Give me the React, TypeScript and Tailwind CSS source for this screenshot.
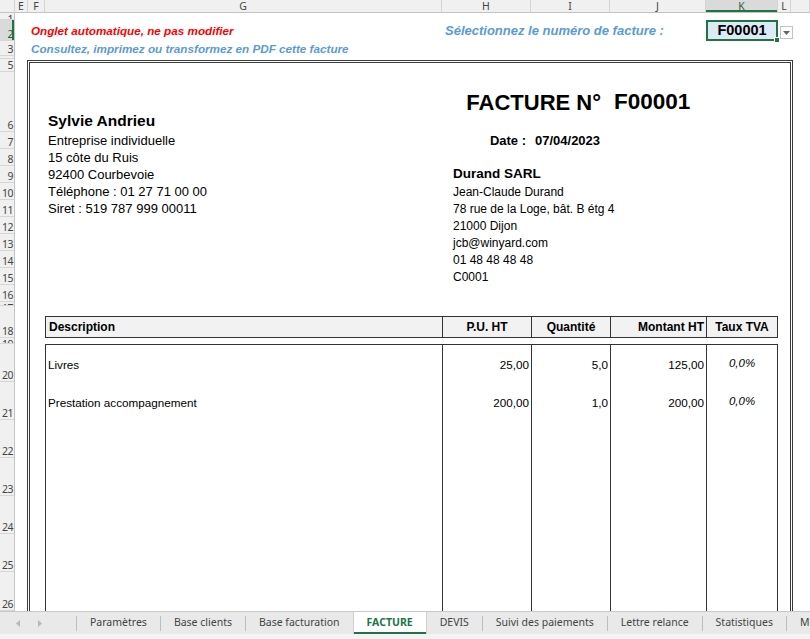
import React from "react";

const sheetFont = "font-['Liberation_Sans',Arial,sans-serif]";
const uiFont = "font-['Noto_Sans','Open_Sans',sans-serif]";

const colHeads = [
  { w: "w-[15px]", l: "" },
  { w: "w-[13px]", l: "E" },
  { w: "w-[17px]", l: "F" },
  { w: "w-[397px]", l: "G" },
  { w: "w-[89px]", l: "H" },
  { w: "w-[79px]", l: "I" },
  { w: "w-[96px]", l: "J" },
  { w: "w-[72px]", l: "K", on: true },
  { w: "w-[13px]", l: "L" },
  { w: "flex-1", l: "" },
];

// Excel rows 1..26, same heights as the sheet grid below
const rows = [
  { h: "h-[7px]", top: true },
  { h: "h-[21px]", on: true },
  { h: "h-[15px]" },
  { h: "h-[3px]", top: true },
  { h: "h-[13px]" },
  { h: "h-[60px]" },
  { h: "h-[17px]" },
  { h: "h-[17px]" },
  { h: "h-[17px]" },
  { h: "h-[17px]" },
  { h: "h-[17px]" },
  { h: "h-[17px]" },
  { h: "h-[17px]" },
  { h: "h-[17px]" },
  { h: "h-[17px]" },
  { h: "h-[17px]" },
  { h: "h-[4px]", top: true },
  { h: "h-[32px]" },
  { h: "h-[6px]", top: true },
  { h: "h-[38px]" },
  { h: "h-[38px]" },
  { h: "h-[38px]" },
  { h: "h-[38px]" },
  { h: "h-[38px]" },
  { h: "h-[38px]" },
  { h: "h-[39px]" },
];

const tabs = [
  "Paramètres",
  "Base clients",
  "Base facturation",
  "FACTURE",
  "DEVIS",
  "Suivi des paiements",
  "Lettre relance",
  "Statistiques",
  "Modèles",
];

function ColumnHeader() {
  return (
    <div className={`flex h-[13px] shrink-0 bg-[#f0f0f0] border-b border-[#c4c4c4] text-[10.5px] leading-[12px] text-[#444] ${uiFont}`}>
      {colHeads.map((c, i) => (
        <div
          key={i}
          className={`${c.w} flex items-center justify-center border-r border-[#d4d4d4] ${
            c.on ? "bg-[#dadada] shadow-[inset_0_-2px_0_#217346] text-[#2f5d44]" : ""
          }`}
        >
          {c.l}
        </div>
      ))}
    </div>
  );
}

function RowHeader() {
  return (
    <div className={`w-[15px] shrink-0 flex flex-col bg-[#f0f0f0] border-r border-[#c4c4c4] text-[10.5px] leading-[12px] text-[#444] ${uiFont}`}>
      {rows.map((r, i) => (
        <div
          key={i}
          className={`${r.h} shrink-0 flex justify-end overflow-hidden border-b border-[#d6d6d6] pr-[1px] tracking-[-0.5px] ${
            r.top ? "items-start" : "items-end"
          } ${r.on ? "bg-[#dadada] shadow-[inset_-2px_0_0_#217346] text-[#1d5f3a]" : ""}`}
        >
          {i + 1}
        </div>
      ))}
    </div>
  );
}

function Sheet() {
  return (
    <div
      className={`flex-1 grid grid-cols-[13px_17px_397px_89px_79px_96px_72px_13px_1fr] grid-rows-[7px_21px_15px_3px_13px_60px_repeat(10,17px)_4px_32px_6px_repeat(6,38px)_39px] text-black ${sheetFont}`}
    >
      {/* top notes */}
      <div className="col-[2/8] row-start-2 self-center pl-[3px] whitespace-nowrap text-[11.7px] font-bold italic text-[#ff0000]">
        Onglet automatique, ne pas modifier
      </div>
      <div className="col-[2/8] row-start-3 self-center pl-[3px] whitespace-nowrap text-[11.7px] font-bold italic text-[#5b9bd5]">
        Consultez, imprimez ou transformez en PDF cette facture
      </div>
      <div className="col-[4/7] row-start-2 self-center pl-[3px] whitespace-nowrap text-[13px] font-bold italic text-[#5b9bd5]">
        Sélectionnez le numéro de facture :
      </div>
      <div className="col-start-7 row-start-2 relative flex items-center justify-center border-2 border-[#217346] bg-[#ddebf7] text-[14.5px] font-bold">
        F00001
        <span className="absolute -right-[4px] -bottom-[4px] w-[6px] h-[6px] bg-[#217346] border border-white" />
      </div>
      <div className="col-start-8 row-start-2 self-end mb-[2px] ml-[2px] w-[13px] h-[13px] flex items-center justify-center border border-[#c2c2c2] bg-white">
        <svg width="7" height="4" viewBox="0 0 7 4">
          <path d="M0 0h7L3.5 4z" fill="#666" />
        </svg>
      </div>

      {/* invoice frame */}
      <div className="col-[2/9] row-[5/27] mt-[1px] -ml-[1px] -mr-[2px] border-[3px] border-b-0 border-double border-[#3a3a3a]" />

      {/* title */}
      <div className="col-[4/6] row-start-6 self-center pr-[9px] text-right whitespace-nowrap text-[22px] font-bold">
        FACTURE N°
      </div>
      <div className="col-start-6 row-start-6 self-center pl-[4px] whitespace-nowrap text-[22.5px] font-bold">
        F00001
      </div>

      {/* seller */}
      <div className="col-start-3 row-start-6 self-end pl-[3px] whitespace-nowrap text-[15.5px] font-bold">
        Sylvie Andrieu
      </div>
      <div className="col-start-3 row-start-7 self-center pl-[3px] text-[13px] whitespace-nowrap">Entreprise individuelle</div>
      <div className="col-start-3 row-start-8 self-center pl-[3px] text-[13px] whitespace-nowrap">15 côte du Ruis</div>
      <div className="col-start-3 row-start-9 self-center pl-[3px] text-[13px] whitespace-nowrap">92400 Courbevoie</div>
      <div className="col-start-3 row-start-10 self-center pl-[3px] text-[13px] whitespace-nowrap">Téléphone : 01 27 71 00 00</div>
      <div className="col-start-3 row-start-11 self-center pl-[3px] text-[13px] whitespace-nowrap">Siret : 519 787 999 00011</div>

      {/* date */}
      <div className="col-start-4 row-start-7 self-center pr-[5px] text-right whitespace-nowrap text-[13px] font-bold">Date :</div>
      <div className="col-start-5 row-start-7 self-center pl-[4px] whitespace-nowrap text-[13px] font-bold">07/04/2023</div>

      {/* client */}
      <div className="col-start-4 row-start-9 self-center pl-[11px] whitespace-nowrap text-[13.5px] font-bold">Durand SARL</div>
      <div className="col-start-4 row-start-10 self-center pl-[11px] whitespace-nowrap text-[12px]">Jean-Claude Durand</div>
      <div className="col-start-4 row-start-11 self-center pl-[11px] whitespace-nowrap text-[12px]">78 rue de la Loge, bât. B étg 4</div>
      <div className="col-start-4 row-start-12 self-center pl-[11px] whitespace-nowrap text-[12px]">21000 Dijon</div>
      <div className="col-start-4 row-start-13 self-center pl-[11px] whitespace-nowrap text-[12px]">jcb@winyard.com</div>
      <div className="col-start-4 row-start-14 self-center pl-[11px] whitespace-nowrap text-[12px]">01 48 48 48 48</div>
      <div className="col-start-4 row-start-15 self-center pl-[11px] whitespace-nowrap text-[12px]">C0001</div>

      {/* table header */}
      <div className="col-start-3 row-start-18 self-end h-[22px] flex items-center pl-[3px] border-y border-l border-[#333] bg-[#f2f2f2] text-[12px] font-bold">
        Description
      </div>
      <div className="col-start-4 row-start-18 self-end h-[22px] flex items-center justify-center border-y border-l border-[#333] bg-[#f2f2f2] text-[12px] font-bold">
        P.U. HT
      </div>
      <div className="col-start-5 row-start-18 self-end h-[22px] flex items-center justify-center border-y border-l border-[#333] bg-[#f2f2f2] text-[12px] font-bold">
        Quantité
      </div>
      <div className="col-start-6 row-start-18 self-end h-[22px] flex items-center justify-end pr-[2px] border-y border-l border-[#333] bg-[#f2f2f2] text-[12px] font-bold">
        Montant HT
      </div>
      <div className="col-start-7 row-start-18 self-end h-[22px] flex items-center justify-center border border-[#333] bg-[#f2f2f2] text-[12px] font-bold">
        Taux TVA
      </div>

      {/* table body columns */}
      <div className="col-start-3 row-[20/27] border-t border-l border-[#333]" />
      <div className="col-start-4 row-[20/27] border-t border-l border-[#333]" />
      <div className="col-start-5 row-[20/27] border-t border-l border-[#333]" />
      <div className="col-start-6 row-[20/27] border-t border-l border-[#333]" />
      <div className="col-start-7 row-[20/27] border-t border-x border-[#333]" />

      {/* lines */}
      <div className="col-start-3 row-start-20 self-center mt-[3px] pl-[3px] text-[11.7px] whitespace-nowrap">Livres</div>
      <div className="col-start-4 row-start-20 self-center mt-[3px] pr-[2px] text-right text-[11.7px]">25,00</div>
      <div className="col-start-5 row-start-20 self-center mt-[3px] pr-[2px] text-right text-[11.7px]">5,0</div>
      <div className="col-start-6 row-start-20 self-center mt-[3px] pr-[2px] text-right text-[11.7px]">125,00</div>
      <div className="col-start-7 row-start-20 self-center mt-[1px] text-center italic text-[11.5px]">0,0%</div>

      <div className="col-start-3 row-start-21 self-center mt-[3px] pl-[3px] text-[11.7px] whitespace-nowrap">Prestation accompagnement</div>
      <div className="col-start-4 row-start-21 self-center mt-[3px] pr-[2px] text-right text-[11.7px]">200,00</div>
      <div className="col-start-5 row-start-21 self-center mt-[3px] pr-[2px] text-right text-[11.7px]">1,0</div>
      <div className="col-start-6 row-start-21 self-center mt-[3px] pr-[2px] text-right text-[11.7px]">200,00</div>
      <div className="col-start-7 row-start-21 self-center mt-[1px] text-center italic text-[11.5px]">0,0%</div>
    </div>
  );
}

function TabBar() {
  return (
    <div className={`shrink-0 ${uiFont}`}>
      <div className="h-[23px] flex items-stretch overflow-hidden bg-[#e9e9e9] border-t border-[#c9c9c9] text-[10.5px] text-[#444] whitespace-nowrap">
        <div className="w-[76px] shrink-0 flex items-center pl-[16px] gap-[18px]">
          <svg width="4" height="7" viewBox="0 0 4 7">
            <path d="M4 0v7L0 3.5z" fill="#b8b8b8" />
          </svg>
          <svg width="4" height="7" viewBox="0 0 4 7">
            <path d="M0 0v7l4-3.5z" fill="#b8b8b8" />
          </svg>
        </div>
        {tabs.map((t, i) => {
          const active = t === "FACTURE";
          const next = tabs[i + 1];
          return (
            <React.Fragment key={t}>
              {i === 0 && <span className="w-px h-[15px] self-center bg-[#bdbdbd] shrink-0" />}
              <div
                className={`shrink-0 flex items-center px-[13px] ${
                  active
                    ? "bg-white font-bold text-[#217346] shadow-[inset_0_-2px_0_#217346] border-x border-[#d0d0d0]"
                    : ""
                }`}
              >
                {t}
              </div>
              {!active && next !== "FACTURE" && next && (
                <span className="w-px h-[15px] self-center bg-[#bdbdbd] shrink-0" />
              )}
            </React.Fragment>
          );
        })}
      </div>
      <div className="h-[5px] bg-[#f3f3f3]" />
    </div>
  );
}

export default function App() {
  return (
    <div className="w-[810px] h-[639px] flex flex-col overflow-hidden bg-white">
      <ColumnHeader />
      <div className="flex h-[598px] shrink-0 overflow-hidden">
        <RowHeader />
        <Sheet />
      </div>
      <TabBar />
    </div>
  );
}
